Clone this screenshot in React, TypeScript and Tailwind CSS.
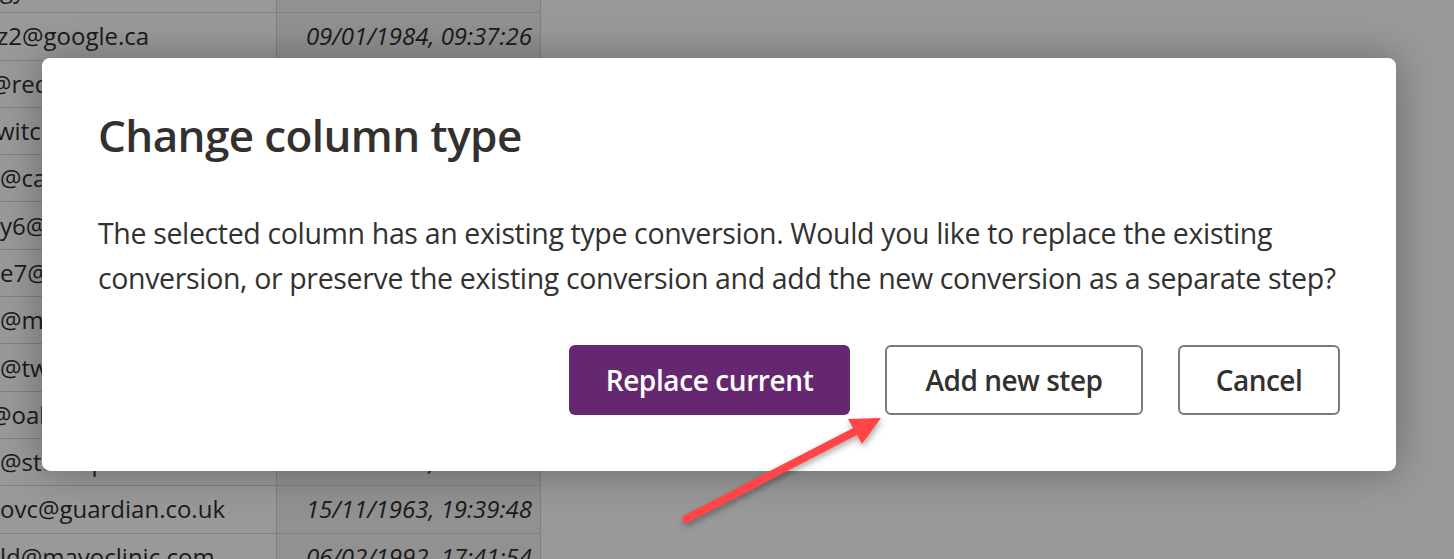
import React from 'react';

const rows = [
    { email: 'gy', date: '', shift: '' },
    { email: 'z2@google.ca', date: '09/01/1984, 09:37:26', shift: '-ml-[3px]' },
    { email: '@redditch.co.uk', date: '21/04/1971, 03:12:09', shift: '-ml-[10px]' },
    { email: 'witch@tumblr.com', date: '02/12/1988, 14:55:31', shift: '-ml-[4px]' },
    { email: '@canalblog.com', date: '17/07/1966, 08:20:44', shift: '' },
    { email: 'y6@yahoo.co.jp', date: '28/03/1979, 22:06:17', shift: '' },
    { email: 'e7@ning.com', date: '11/10/1990, 11:48:02', shift: '' },
    { email: '@microsoft.com', date: '05/06/1959, 16:33:59', shift: '' },
    { email: '@twitter.com', date: '30/08/1975, 06:14:23', shift: '' },
    { email: '@oakley.com', date: '19/02/1983, 01:57:40', shift: '-ml-[10px]' },
    { email: '@studiopress.com', date: '25/05/1957, 20:37:58', shift: '' },
    { email: 'ovc@guardian.co.uk', date: '15/11/1963, 19:39:48', shift: '' },
    { email: 'ld@mayoclinic.com', date: '06/02/1992, 17:41:54', shift: '' },
];

function BackgroundTable() {
    return (
        <div className="-mt-[34px] w-[541px] border-r border-[#d6d6d6] bg-white">
            {rows.map((r, i) => (
                <div key={i} className="flex h-[47.3px] border-b border-[#d6d6d6] text-[24px] text-[#2f2f2f]">
                    <div className="flex w-[277px] items-center overflow-hidden whitespace-nowrap border-r border-[#d6d6d6]">
                        <span className={r.shift}>{r.email}</span>
                    </div>
                    <div className="flex flex-1 items-center justify-end bg-[#f2f2f2] pr-[8px] italic">
                        {r.date}
                    </div>
                </div>
            ))}
        </div>
    );
}

function Arrow() {
    return (
        <svg className="absolute left-0 top-0" width="1454" height="559" viewBox="0 0 1454 559">
            <defs>
                <filter id="sh" x="-20%" y="-20%" width="140%" height="140%">
                    <feDropShadow dx="1" dy="3" stdDeviation="3" floodColor="#000" floodOpacity="0.35" />
                </filter>
            </defs>
            <g filter="url(#sh)">
                <line x1="686" y1="519" x2="858" y2="430" stroke="#ff4444" strokeWidth="8" strokeLinecap="round" />
                <polygon points="881,418 848,419 862,444" fill="#ff4444" />
            </g>
        </svg>
    );
}

export default function App() {
    return (
        <div
            className="relative h-[559px] w-[1454px] overflow-hidden bg-white"
            style={{ fontFamily: '"Open Sans", "Noto Sans", sans-serif' }}
        >
            <BackgroundTable />
            {/* dim overlay */}
            <div className="absolute inset-0 bg-black/40" />

            {/* dialog */}
            <div className="absolute left-[42px] top-[58px] flex h-[413px] w-[1354px] flex-col rounded-[8px] bg-white px-[56px] shadow-[0_0_40px_rgba(0,0,0,0.32)]">
                <h1 className="mt-[47px] text-[44px] font-semibold leading-[60px] tracking-[-0.6px] text-[#323130]">
                    Change column type
                </h1>
                <p className="mt-[46px] text-[28.5px] leading-[45px] tracking-[-0.35px] text-[#323130]">
                    The selected column has an existing type conversion. Would you like to replace the existing
                    <br />
                    conversion, or preserve the existing conversion and add the new conversion as a separate step?
                </p>
                <div className="mt-auto mb-[56px] flex justify-end gap-[35px]">
                    <button className="h-[70px] w-[281px] rounded-[6px] bg-[#652770] text-[28px] font-semibold tracking-[-0.4px] text-white">
                        Replace current
                    </button>
                    <button className="h-[70px] w-[258px] rounded-[6px] border-2 border-[#7a7a7a] bg-white text-[28px] font-semibold tracking-[-0.5px] text-[#323130]">
                        Add new step
                    </button>
                    <button className="h-[70px] w-[162px] rounded-[6px] border-2 border-[#7a7a7a] bg-white text-[28px] font-semibold tracking-[-0.5px] text-[#323130]">
                        Cancel
                    </button>
                </div>
            </div>

            <Arrow />
        </div>
    );
}
